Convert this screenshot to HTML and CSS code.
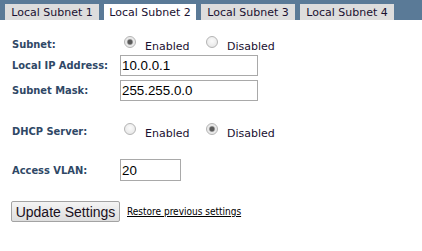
FILE: index.html
```html
<!DOCTYPE html>
<html>
<head>
<meta charset="utf-8">
<link rel="stylesheet" href="styles.css">
</head>
<body>
<div class="tabbar">
  <span class="tab">Local Subnet 1</span>
  <span class="tab active">Local Subnet 2</span>
  <span class="tab">Local Subnet 3</span>
  <span class="tab">Local Subnet 4</span>
</div>
<form class="form">
  <div class="row row-subnet">
    <div class="label">Subnet:</div>
    <div class="radios">
      <label class="opt"><input type="radio" name="subnet" checked><span>Enabled</span></label>
      <label class="opt"><input type="radio" name="subnet"><span>Disabled</span></label>
    </div>
  </div>
  <div class="row row-ip">
    <div class="label">Local IP Address:</div>
    <input class="text wide" type="text" value="10.0.0.1">
  </div>
  <div class="row row-mask">
    <div class="label">Subnet Mask:</div>
    <input class="text wide" type="text" value="255.255.0.0">
  </div>
  <div class="row row-dhcp">
    <div class="label">DHCP Server:</div>
    <div class="radios">
      <label class="opt"><input type="radio" name="dhcp"><span>Enabled</span></label>
      <label class="opt"><input type="radio" name="dhcp" checked><span>Disabled</span></label>
    </div>
  </div>
  <div class="row row-vlan">
    <div class="label">Access VLAN:</div>
    <input class="text narrow" type="text" value="20">
  </div>
  <div class="row row-actions">
    <button class="btn" type="button">Update Settings</button>
    <a class="restore" href="#">Restore previous settings</a>
  </div>
</form>
</body>
</html>
```
FILE: styles.css
```css
html, body {
  margin: 0;
  padding: 0;
  background: #fff;
}
body {
  font-family: "DejaVu Sans", Verdana, sans-serif;
  font-size: 11px;
  color: #1a1030;
}
.tabbar {
  background: #5a7a97;
  height: 20px;
  display: flex;
  align-items: flex-end;
  gap: 5px;
  padding-left: 5px;
}
.tab {
  background: #dddddd;
  width: 94px;
  height: 16px;
  line-height: 17px;
  text-align: center;
  color: #1a1030;
  font-size: 11px;
}
.tab.active {
  background: #fff;
  width: 92px;
}
.form {
  margin: 0;
  padding: 16px 0 0 12px;
  display: flex;
  flex-direction: column;
}
.row {
  display: flex;
  align-items: center;
}
.label {
  width: 108px;
  flex: none;
  font-family: "DejaVu Sans Condensed", "DejaVu Sans", sans-serif;
  font-weight: bold;
  color: #2f4866;
  font-size: 11px;
}
.row-subnet { height: 16px; }
.row-ip { margin-top: 3px; }
.row-mask { margin-top: 4px; }
.row-dhcp { height: 16px; margin-top: 22px; }
.row-vlan { margin-top: 20px; }
.row-actions { margin-top: 20px; gap: 7px; }
.radios {
  display: flex;
  align-self: stretch;
  padding-left: 4px;
}
.opt {
  display: flex;
  width: 82px;
  align-items: flex-start;
}
.opt input {
  appearance: none;
  -webkit-appearance: none;
  margin: 0 9px 0 0;
  width: 12px;
  height: 12px;
  border-radius: 50%;
  border: 1px solid #b4b4b4;
  background: radial-gradient(circle at 50% 40%, #fbfbfb 0%, #ececec 60%, #dcdcdc 100%);
  box-sizing: border-box;
  flex: none;
}
.opt input:checked {
  background: radial-gradient(circle, #5a5a5a 0, #5a5a5a 2px, #9a9a9a 2.6px, #e6e6e6 3.4px, #f3f3f3 100%);
}
.opt span {
  margin-top: 4px;
  line-height: 13px;
}
.text {
  font-family: "Liberation Sans", Arial, sans-serif;
  font-size: 13.33px;
  border: 1px solid #a9a9a9;
  padding: 0 1px;
  margin: 0;
  height: 21px;
  box-sizing: border-box;
  color: #000;
  outline: none;
}
.wide { width: 138px; }
.narrow { width: 61px; height: 22px; }
.btn {
  font-family: "Liberation Sans", Arial, sans-serif;
  font-size: 14px;
  height: 21px;
  width: 109px;
  padding: 0;
  margin: 0 0 0 -1px;
  border: 1px solid #a3a3a3;
  border-radius: 2px;
  background: linear-gradient(#f4f4f4, #dedede);
  color: #1a1020;
}
.restore {
  color: #000;
  font-family: "DejaVu Sans Condensed", "DejaVu Sans", sans-serif;
  font-size: 10px;
  text-decoration: underline;
}
```
